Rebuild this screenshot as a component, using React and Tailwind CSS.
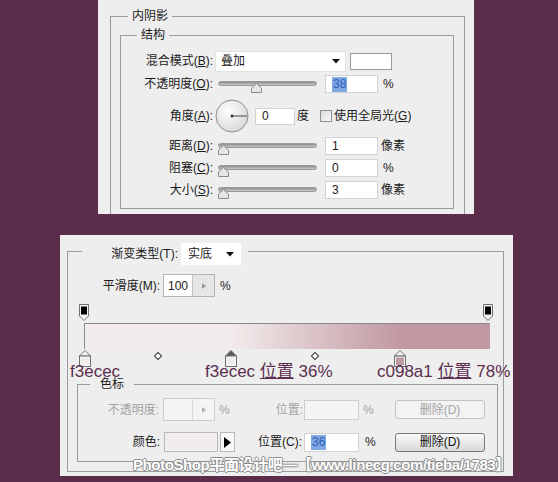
import React from "react";

const ui = "font-['Liberation_Sans','Noto_Sans_CJK_SC',sans-serif]";

function Key({ k }) {
    return <>(<span className="underline">{k}</span>):</>;
}

function Slider({ pos }) {
    return (
        <div className="relative w-[99px] h-[14px]">
            <div className="absolute left-0 top-[1px] w-[99px] h-[5px] rounded-full bg-gradient-to-b from-[#8d8d8d] to-[#c9c9c9] border border-[#9a9a9a]" />
            <svg className="absolute top-[3px]" style={{ left: pos }} width="11" height="10" viewBox="0 0 11 10">
                <path d="M5.5 0.5 L10.5 5 V9.5 H0.5 V5 Z" fill="#e6e6e6" stroke="#8a8a8a" />
            </svg>
        </div>
    );
}

function Field({ w, h = 18, children, className = "" }) {
    return (
        <div className={`bg-white border border-[#d2d2d2] flex items-center pl-[6px] text-[12px] ${className}`} style={{ width: w, height: h }}>
            {children}
        </div>
    );
}

function Selected({ v }) {
    return <span className="bg-[#7fa8e2] text-[#2d5fb5] px-[1px] leading-[15px]">{v}</span>;
}

function TopStop() {
    return (
        <svg width="10" height="18" viewBox="0 0 10 18">
            <path d="M0.5 0.5 H9.5 V12 L5 16.5 L0.5 12 Z" fill="#f2f2f2" stroke="#6f6f6f" />
            <rect x="2" y="2.5" width="6" height="8" fill="#000" />
        </svg>
    );
}

function BottomStop({ color, selected }) {
    return (
        <svg width="12" height="17" viewBox="0 0 12 17">
            <path d="M6 0.5 L11.5 6 H0.5 Z" fill={selected ? "#5a5a5a" : "#f4f4f4"} stroke="#6f6f6f" />
            <rect x="0.5" y="6" width="11" height="10.5" fill="#f6f6f6" stroke="#6f6f6f" />
            <rect x="2" y="7.5" width="8" height="7.5" fill={color} />
        </svg>
    );
}

function Diamond({ left }) {
    return (
        <div className="absolute top-[49px] w-[6px] h-[6px] rotate-45 border border-[#333] bg-white" style={{ left }} />
    );
}

function Button({ disabled }) {
    return (
        <div className={`ml-[18px] w-[90px] h-[19px] rounded-[3px] flex items-center justify-center text-[12px] border ${disabled ? "border-[#c4c4c4] bg-[#f3f3f3] text-[#a4a4a4]" : "border-[#777] bg-gradient-to-b from-[#fafafa] to-[#d9d9d9] text-[#111]"}`}>
            删除(D)
        </div>
    );
}

export default function App() {
    return (
        <div className={`w-[558px] h-[482px] bg-[#5c2c4b] overflow-hidden text-[12px] text-[#1a1a1a] ${ui}`}>
            {/* 内阴影 */}
            <div className="ml-[98px] w-[376px] h-[214px] bg-[#eeeeee] overflow-hidden pt-[9px]">
                <fieldset className="ml-[12px] w-[355px] h-[230px] border border-[#9b9b9b]">
                    <legend className="ml-[17px] px-[4px] leading-[14px]">内阴影</legend>
                    <fieldset className="ml-[9px] mt-[5px] w-[334px] border border-[#9b9b9b] pb-[8px]">
                        <legend className="ml-[16px] px-[4px] leading-[14px]">结构</legend>

                        <div className="flex items-center h-[22px] mt-[8px]">
                            <span className="w-[92px] text-right">混合模式<Key k="B" /></span>
                            <div className="ml-[2px] w-[131px] h-[21px] bg-white border border-[#e2e2e2] flex items-center justify-between pl-[5px] pr-[5px]">
                                <span>叠加</span>
                                <svg width="8" height="5" viewBox="0 0 8 5"><path d="M0 0 H8 L4 4.5 Z" fill="#111" /></svg>
                            </div>
                            <div className="ml-[4px] w-[42px] h-[17px] bg-white border border-[#9a9a9a]" />
                        </div>

                        <div className="flex items-center h-[24px]">
                            <span className="w-[92px] text-right">不透明度<Key k="O" /></span>
                            <div className="ml-[5px] pt-[5px]"><Slider pos={33} /></div>
                            <Field w={53} className="ml-[8px]"><Selected v="38" /></Field>
                            <span className="ml-[5px]">%</span>
                        </div>

                        <div className="flex items-center h-[40px]">
                            <span className="w-[92px] text-right">角度<Key k="A" /></span>
                            <svg className="ml-[2px]" width="34" height="34" viewBox="0 0 34 34">
                                <defs>
                                    <radialGradient id="dial" cx="40%" cy="35%" r="70%">
                                        <stop offset="0" stopColor="#ffffff" />
                                        <stop offset="1" stopColor="#d6d6d6" />
                                    </radialGradient>
                                </defs>
                                <circle cx="17" cy="17" r="16" fill="url(#dial)" stroke="#8f8f8f" />
                                <line x1="17" y1="17" x2="32" y2="17" stroke="#444" strokeWidth="1" />
                                <circle cx="17" cy="17" r="1.5" fill="#333" />
                            </svg>
                            <Field w={40} h={17} className="ml-[6px]">0</Field>
                            <span className="ml-[2px]">度</span>
                            <div className="ml-[11px] w-[12px] h-[12px] border border-[#8f8f8f] bg-gradient-to-br from-[#dcdcdc] to-[#f7f7f7]" />
                            <span className="ml-[2px]">使用全局光<span>(<span className="underline">G</span>)</span></span>
                        </div>

                        {[["距离", "D", "1", "像素"], ["阻塞", "C", "0", "%"], ["大小", "S", "3", "像素"]].map(([l, k, v, u], i) => (
                            <div key={k} className={`flex items-center h-[20px] ${i ? "mt-[2px]" : ""}`}>
                                <span className="w-[92px] text-right">{l}<Key k={k} /></span>
                                <div className="ml-[5px] pt-[5px]"><Slider pos={0} /></div>
                                <Field w={53} className="ml-[8px]">{v}</Field>
                                <span className={u === "%" ? "ml-[5px]" : "ml-[3px]"}>{u}</span>
                            </div>
                        ))}
                    </fieldset>
                </fieldset>
            </div>

            {/* 渐变编辑器 */}
            <div className="relative mt-[21px] ml-[60px] w-[453px] h-[241px] bg-[#eeeeee] pt-[2px]">
                <fieldset className="ml-[7px] w-[437px] border border-[#9b9b9b]">
                    <legend className="ml-[14px] pr-[7px] h-[28px] flex items-end">
                        <div className="flex items-center h-[22px]">
                            <span className="w-[96px] text-right">渐变类型(T):</span>
                            <div className="ml-[3px] w-[60px] h-[22px] bg-white flex items-center justify-between pl-[7px] pr-[7px]">
                                <span>实底</span>
                                <svg width="8" height="5" viewBox="0 0 8 5"><path d="M0 0 H8 L4 4.5 Z" fill="#111" /></svg>
                            </div>
                        </div>
                    </legend>

                    <div className="flex items-center h-[23px] mt-[9px]">
                        <span className="w-[92px] text-right">平滑度(M):</span>
                        <div className="ml-[3px] w-[52px] h-[23px] border border-[#b4b4b4] bg-white flex">
                            <div className="flex-1 flex items-center pl-[4px]">100</div>
                            <div className="w-[22px] bg-[#e6e6e6] border-l border-[#c4c4c4] flex items-center justify-center">
                                <svg width="4" height="6" viewBox="0 0 4 6"><path d="M0 0 L4 3 L0 6 Z" fill="#9a9a9a" /></svg>
                            </div>
                        </div>
                        <span className="ml-[5px]">%</span>
                    </div>

                    {/* 渐变条 */}
                    <div className="relative ml-[11px] mt-[7px] w-[416px] h-[63px]">
                        <div className="absolute left-0 top-0"><TopStop /></div>
                        <div className="absolute left-[404px] top-0"><TopStop /></div>
                        <div className="absolute left-[5px] top-[19px] w-[406px] h-[26px] border-l border-t border-[#8c8c8c] bg-[linear-gradient(to_right,#f3ecec_0%,#f3ecec_36%,#c098a1_78%,#c098a1_100%)]" />
                        <div className="absolute left-0 top-[46px]"><BottomStop color="#f3ecec" /></div>
                        <div className="absolute left-[146px] top-[46px]"><BottomStop color="#f3ecec" selected /></div>
                        <div className="absolute left-[315px] top-[46px]"><BottomStop color="#c098a1" /></div>
                        <Diamond left={76} />
                        <Diamond left={233} />
                    </div>

                    {/* 色标 */}
                    <fieldset className="ml-[9px] mt-[10px] mb-[9px] w-[421px] border border-[#9b9b9b] pb-[9px]">
                        <legend className="ml-[12px] px-[10px] leading-[14px]">色标</legend>

                        <div className="flex items-center h-[23px] mt-[7px] text-[#a4a4a4]">
                            <span className="w-[81px] text-right">不透明度:</span>
                            <div className="ml-[4px] w-[52px] h-[23px] border border-[#cdcdcd] bg-[#f4f4f4] flex">
                                <div className="flex-1" />
                                <div className="w-[22px] border-l border-[#d8d8d8] flex items-center justify-center">
                                    <svg width="4" height="6" viewBox="0 0 4 6"><path d="M0 0 L4 3 L0 6 Z" fill="#b0b0b0" /></svg>
                                </div>
                            </div>
                            <span className="ml-[4px] w-[14px]">%</span>
                            <span className="w-[70px] text-right">位置:</span>
                            <div className="ml-[1px] w-[55px] h-[20px] border border-[#cdcdcd] bg-[#f4f4f4]" />
                            <span className="ml-[4px] w-[14px]">%</span>
                            <Button disabled />
                        </div>

                        <div className="flex items-center h-[20px] mt-[11px]">
                            <span className="w-[82px] text-right">颜色:</span>
                            <div className="ml-[4px] w-[54px] h-[20px] border border-[#b8b8b8] bg-[#f3ecec]" />
                            <div className="ml-[2px] w-[15px] h-[20px] border border-[#b8b8b8] bg-[#f8f8f8] flex items-center justify-center">
                                <svg width="7" height="11" viewBox="0 0 7 11"><path d="M0 0 L7 5.5 L0 11 Z" fill="#000" /></svg>
                            </div>
                            <span className="w-[67px] text-right">位置(C):</span>
                            <Field w={55} h={19} className="ml-[2px]"><Selected v="36" /></Field>
                            <span className="ml-[6px] w-[14px]">%</span>
                            <div className="-ml-[2px]"><Button /></div>
                        </div>
                    </fieldset>
                </fieldset>

                {/* 标注 */}
                <div className="absolute left-[10px] top-[128px] text-[17px] leading-none text-[#5b2f4f]">f3ecec</div>
                <div className="absolute left-[145px] top-[128px] text-[17px] leading-none text-[#5b2f4f]">f3ecec <span className="underline">位置</span> 36%</div>
                <div className="absolute left-[317px] top-[128px] text-[17px] leading-none text-[#5b2f4f]">c098a1 <span className="underline">位置</span> 78%</div>

                <div className="absolute left-[73px] top-[222px] whitespace-nowrap text-[15px] leading-none font-bold text-white tracking-[-0.4px] [text-shadow:1px_0_0_#8a8a8a,-1px_0_0_#8a8a8a,0_1px_0_#8a8a8a,0_-1px_0_#8a8a8a]">
                    PhotoShop平面设计吧—【www.linecg.com/tieba/1783】
                </div>
            </div>
        </div>
    );
}
